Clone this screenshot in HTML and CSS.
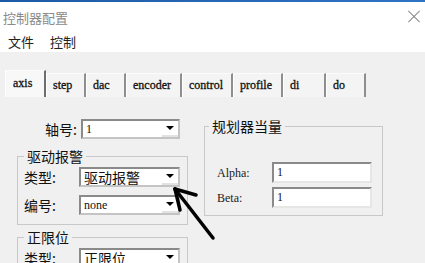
FILE: index.html
```html
<!DOCTYPE html>
<html lang="zh">
<head>
    <meta charset="UTF-8">
    <title>控制器配置</title>
    <link rel="stylesheet" href="styles.css">
</head>
<body>
    <div class="topline"></div>
    <div class="titlebar">
        <span class="title">控制器配置</span>
        <span class="close"></span>
    </div>
    <div class="menubar">
        <span>文件</span>
        <span>控制</span>
    </div>

    <div class="tabs">
        <div class="tab active" style="width:41px">axis</div>
        <div class="tab" style="width:40px">step</div>
        <div class="tab" style="width:40px">dac</div>
        <div class="tab" style="width:56px">encoder</div>
        <div class="tab" style="width:51px">control</div>
        <div class="tab" style="width:50px">profile</div>
        <div class="tab" style="width:43px">di</div>
        <div class="tab" style="width:40px">do</div>
    </div>

    <div class="panel">
        <div class="col-left">
            <div class="row axis-row">
                <label>轴号:</label>
                <div class="combo"><span class="val">1</span><i class="drop"></i></div>
            </div>

            <fieldset class="group">
                <legend>驱动报警</legend>
                <div class="row">
                    <label>类型:</label>
                    <div class="combo wide"><span class="val cjk">驱动报警</span><i class="drop"></i></div>
                </div>
                <div class="row">
                    <label>编号:</label>
                    <div class="combo wide"><span class="val">none</span><i class="drop"></i></div>
                </div>
            </fieldset>

            <fieldset class="group second">
                <legend>正限位</legend>
                <div class="row">
                    <label>类型:</label>
                    <div class="combo wide"><span class="val cjk">正限位</span><i class="drop"></i></div>
                </div>
            </fieldset>
        </div>

        <div class="col-right">
            <fieldset class="group planner">
                <legend>规划器当量</legend>
                <div class="row">
                    <label class="latin">Alpha:</label>
                    <div class="edit">1</div>
                </div>
                <div class="row">
                    <label class="latin">Beta:</label>
                    <div class="edit">1</div>
                </div>
            </fieldset>
        </div>
    </div>

    <svg class="pointer" width="425" height="263" viewBox="0 0 425 263">
        <g stroke="#000" stroke-width="3.5" stroke-linecap="round" fill="none">
            <line x1="175" y1="189" x2="213" y2="238"/>
            <line x1="175" y1="189" x2="196" y2="195"/>
            <line x1="175" y1="189" x2="180" y2="210"/>
        </g>
    </svg>
</body>
</html>
```

FILE: styles.css
```css
* {
    box-sizing: border-box;
}

body {
    margin: 0;
    width: 425px;
    height: 263px;
    overflow: hidden;
    background: #f0f0f0;
    font-family: "Noto Sans CJK SC", sans-serif;
    font-size: 14px;
    color: #111;
    position: relative;
}

.topline {
    height: 2px;
    background: linear-gradient(to right, #1d5aa6, #2f74c4);
}

.titlebar {
    height: 28px;
    background: #fff;
    display: flex;
    align-items: center;
    justify-content: space-between;
    padding: 2px 5px 0 3px;
}

.title {
    font-size: 13px;
    color: #8a8a8a;
}

.close {
    width: 12px;
    height: 12px;
    position: relative;
}

.close::before, .close::after {
    content: "";
    position: absolute;
    left: -2px;
    top: 5px;
    width: 16px;
    height: 1px;
    background: #8a8a8a;
    transform: rotate(45deg);
}

.close::after {
    transform: rotate(-45deg);
}

.menubar {
    height: 22px;
    background: #fff;
    display: flex;
    gap: 16px;
    padding-left: 8px;
    align-items: center;
    font-size: 13px;
    color: #222;
}

.tabs {
    display: flex;
    align-items: flex-end;
    margin-top: 18px;
    padding-left: 5px;
    height: 27px;
}

.tab {
    height: 24px;
    line-height: 22px;
    padding-left: 6px;
    font-family: "Liberation Serif", serif;
    font-size: 12px;
    color: #111;
    -webkit-text-stroke: 0.3px #111;
    background: #f4f4f4;
    border-top: 1px solid #fcfcfc;
    border-left: 1px solid #fff;
    border-right: 2px solid #8e8e8e;
}

.tab.active {
    height: 27px;
    line-height: 24px;
    padding-left: 7px;
    background: #f8f8f8;
    border-right-color: #6e6e6e;
}

.panel {
    display: grid;
    grid-template-columns: 171px 179px;
    column-gap: 16px;
    align-items: start;
    padding: 19px 0 0 17px;
}

.col-left {
    padding-top: 3px;
}

.row {
    display: flex;
    align-items: center;
}

.row label {
    width: 55px;
    line-height: 20px;
}

.axis-row label {
    width: 60px;
    margin-right: 4px;
    text-align: right;
}

.row label.latin {
    font-family: "Liberation Serif", serif;
    font-size: 12px;
    color: #222;
}

.combo {
    width: 99px;
    height: 20px;
    background: #fff;
    border: 2px solid;
    border-color: #8a8a8a #c4c4c4 #c4c4c4 #8a8a8a;
    display: flex;
    align-items: center;
    justify-content: space-between;
}

.combo.wide {
    width: 101px;
}

.val {
    padding-left: 3px;
    font-family: "Liberation Serif", serif;
    font-size: 12px;
    line-height: 16px;
}

.val.cjk {
    font-family: "Noto Sans CJK SC", sans-serif;
    font-size: 14px;
}

.drop {
    width: 16px;
    height: 16px;
    display: flex;
    align-items: center;
    justify-content: center;
    border-bottom: 2px solid #e2e2e2;
}

.drop::after {
    content: "";
    border-top: 4px solid #000;
    border-left: 4px solid transparent;
    border-right: 4px solid transparent;
}

.edit {
    width: 100px;
    height: 21px;
    background: #fff;
    border: 2px solid;
    border-color: #8a8a8a #e6e6e6 #e6e6e6 #8a8a8a;
    padding-left: 3px;
    font-family: "Liberation Serif", serif;
    font-size: 12px;
    line-height: 17px;
}

.group {
    margin: 7px 0 0;
    min-width: 0;
    border: 1px solid #c8c8c8;
    padding: 1px 7px 9px 6px;
    display: flex;
    flex-direction: column;
    gap: 8px;
}

.group.second {
    margin-top: 2px;
}

.group legend {
    padding: 0 3px;
    line-height: 20px;
}

.group.planner {
    margin: 0;
    padding: 26px 9px 7px 12px;
    gap: 4px;
}

.group.planner legend {
    margin-left: -8px;
}

.pointer {
    position: absolute;
    left: 0;
    top: 0;
    pointer-events: none;
}
```
